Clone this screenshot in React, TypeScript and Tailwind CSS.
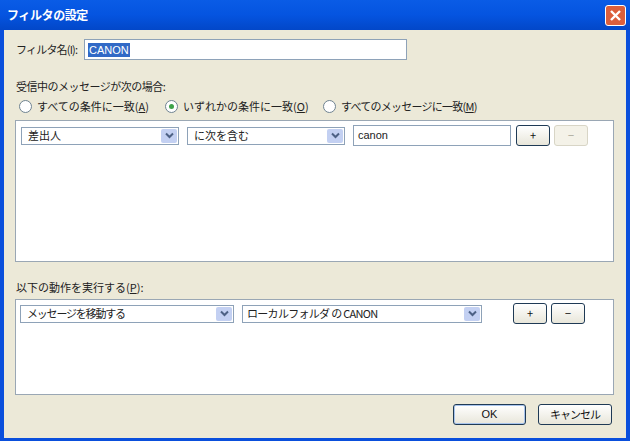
import type { ReactNode } from 'react';

const jp = "font-['Noto_Sans_CJK_JP','Liberation_Sans',sans-serif]";
const latin = "font-['Liberation_Sans',sans-serif]";

function Select({ label, className, labelClass = '' }: { label: string; className: string; labelClass?: string }) {
  return (
    <div className={`flex h-[18px] items-center justify-between border border-[#8ea2b8] bg-white pl-[6px] pr-px ${className}`}>
      <span className={`text-[11px] leading-none text-[#222] ${labelClass}`}>{label}</span>
      <span className="flex h-[14px] w-[16px] items-center justify-center rounded-[2px] bg-[#c3d0f2]">
        <svg width="9" height="7" viewBox="0 0 9 7">
          <path d="M1 1.5 L4.5 5 L8 1.5" fill="none" stroke="#4d6185" strokeWidth="2" />
        </svg>
      </span>
    </div>
  );
}

function Button({ children, className, disabled }: { children: ReactNode; className: string; disabled?: boolean }) {
  return (
    <div
      className={`flex items-center justify-center rounded-[3px] border text-[11px] leading-none ${
        disabled
          ? 'border-[#d8d5c6] bg-[#f4f2e8] text-[#aaa89a]'
          : 'border-[#1f3a55] bg-gradient-to-b from-white to-[#e8e6da] text-[#111]'
      } ${className}`}
    >
      {children}
    </div>
  );
}

function Radio({ label, mnemonic, checked, className, labelClass = '' }: { label: string; mnemonic: string; checked?: boolean; className: string; labelClass?: string }) {
  return (
    <div className={`flex items-center gap-[5px] ${className}`}>
      <span className="flex h-[13px] w-[13px] items-center justify-center rounded-full border border-[#6f8391] bg-white">
        {checked && <span className="h-[5px] w-[5px] rounded-full bg-[#3fa34a]" />}
      </span>
      <span className={`text-[11px] leading-none text-[#222] ${labelClass}`}>
        {label}(<span className="underline">{mnemonic}</span>)
      </span>
    </div>
  );
}

export default function App() {
  return (
    <div className={`flex h-[441px] w-[630px] flex-col overflow-hidden bg-[#0a4fdc] ${jp}`}>
      {/* タイトルバー */}
      <div className="flex h-[30px] shrink-0 items-center justify-between bg-gradient-to-b from-[#0a5ce6] via-[#0554e0] to-[#0247c8] pl-[7px] pr-[4px]">
        <span className="text-[12px] font-bold leading-none tracking-[-0.4px] text-white">フィルタの設定</span>
        <span className="flex h-[21px] w-[21px] items-center justify-center rounded-[3px] border border-white bg-[#dc5f3c]">
          <svg width="13" height="13" viewBox="0 0 13 13">
            <path d="M2 2 L11 11 M11 2 L2 11" stroke="#fff" strokeWidth="2.4" />
          </svg>
        </span>
      </div>

      {/* 本体 */}
      <div className="mb-[3px] ml-[4px] mr-[4px] flex flex-1 flex-col bg-[#ece9d8] pl-[11px] pr-[12px] text-[#222]">
        <div className="mt-[9px] flex h-[21px] items-center">
          <span className="ml-[1px] w-[68px] text-[11px] leading-none tracking-[-0.8px]">フィルタ名(I):</span>
          <div className="flex h-[21px] w-[323px] items-center border border-[#8ea2b8] bg-white pl-[3px]">
            <span className={`bg-[#3169c6] px-[1px] text-[11px] leading-[14px] text-white ${latin}`}>CANON</span>
          </div>
        </div>

        <div className="ml-[1px] mt-[19px] h-[14px] text-[11px] leading-[14px] tracking-[-0.5px]">受信中のメッセージが次の場合:</div>

        <div className="mt-[6px] flex h-[14px] items-center">
          <Radio className="ml-[4px] w-[146px]" label="すべての条件に一致" mnemonic="A" checked={false} />
          <Radio className="w-[158px]" label="いずれかの条件に一致" mnemonic="O" checked />
          <Radio label="すべてのメッセージに一致" mnemonic="M" className="" labelClass="tracking-[-0.75px]" />
        </div>

        <div className="mt-[7px] h-[142px] border border-[#9aa7b4] bg-white pl-[5px] pt-[4px]">
          <div className="flex h-[21px] items-center">
            <Select label="差出人" className="w-[158px]" />
            <Select label="に次を含む" className="ml-[8px] w-[158px]" />
            <div className={`ml-[8px] flex h-[21px] w-[158px] items-center border border-[#8ea2b8] pl-[4px] text-[11px] text-[#222] ${latin}`}>canon</div>
            <Button className="ml-[5px] h-[21px] w-[34px]">+</Button>
            <Button className={`ml-[4px] h-[21px] w-[34px] ${latin}`} disabled>−</Button>
          </div>
        </div>

        <div className="ml-[1px] mt-[18px] h-[14px] text-[11px] leading-[14px]">
          以下の動作を実行する(<span className="underline">P</span>):
        </div>

        <div className="mt-[5px] h-[96px] border border-[#9aa7b4] bg-white pl-[4px] pt-[3px]">
          <div className="flex h-[21px] items-center">
            <Select label="メッセージを移動する" className="w-[214px]" labelClass="tracking-[-1.2px]" />
            <Select label="ローカルフォルダ の CANON" className="ml-[8px] w-[240px] !pl-[4px]" labelClass="tracking-[-0.7px]" />
            <Button className="ml-[31px] h-[21px] w-[34px]">+</Button>
            <Button className={`ml-[4px] h-[21px] w-[34px] ${latin}`}>−</Button>
          </div>
        </div>

        <div className="mt-[9px] flex justify-end">
          <Button className={`h-[21px] w-[73px] shadow-[inset_0_0_0_1px_#a8c4ec] ${latin}`}>OK</Button>
          <Button className="ml-[12px] mr-[2px] h-[21px] w-[74px] tracking-[-1px]">キャンセル</Button>
        </div>
      </div>
    </div>
  );
}
